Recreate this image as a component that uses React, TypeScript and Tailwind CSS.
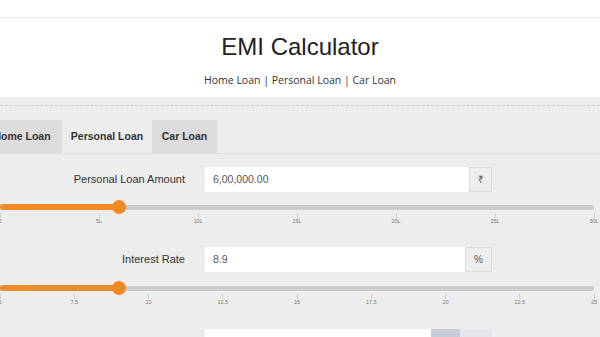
import React from 'react';

const amountTicks = ['0', '5L', '10L', '15L', '20L', '25L', '30L'];
const rateTicks = ['5', '7.5', '10', '12.5', '15', '17.5', '20', '22.5', '25'];

function Slider({ percent, ticks }: { percent: number; ticks: string[] }) {
  return (
    <div className="w-[594px]">
      <div className="relative h-[14px]">
        <div className="absolute left-0 right-0 top-[5px] h-[5px] rounded-full bg-[#cccccc]" />
        <div className="absolute left-0 top-[4px] h-[6px] rounded-full bg-[#f28a26]" style={{ width: `${percent}%` }} />
        <div
          className="absolute top-0 h-[14px] w-[14px] -ml-[7px] rounded-full bg-[#f28a26]"
          style={{ left: `${percent}%` }}
        />
      </div>
      <div className="flex justify-between -mt-[1px]">
        {ticks.map((t) => (
          <div key={t} className="relative w-0 flex flex-col items-center">
            <div className="w-px h-[5px] bg-[#d0d0d0]" />
            <span className="text-[5.5px] leading-[7px] text-[#777] whitespace-nowrap">{t}</span>
          </div>
        ))}
      </div>
    </div>
  );
}

function Field({ label, value, inputWidth, addon, addonWidth }: { label: string; value: string; inputWidth: string; addon: string; addonWidth: string }) {
  return (
    <div className="flex items-center h-[25px]">
      <div className="w-[185px] text-right text-[11px] text-[#333]">{label}</div>
      <div className="ml-[20px] flex h-[25px]">
        <div className={`${inputWidth} bg-white flex items-center pl-[8px] text-[10.5px] text-[#555]`}>{value}</div>
        <div className={`${addonWidth} bg-[#eeeeee] border border-[#dcdcdc] flex items-center justify-center text-[10px] text-[#555]`}>{addon}</div>
      </div>
    </div>
  );
}

export default function App() {
  return (
    <div className="w-[600px] h-[337px] overflow-hidden bg-white font-['Liberation_Sans',Arial,sans-serif]">
      <div className="h-[18px] border-b border-[#e9e9e9]" />
      <header className="h-[79px] flex flex-col items-center">
        <h1 className="mt-[14px] text-[24px] leading-[30px] text-[#222]">EMI Calculator</h1>
        <p className="mt-[11px] text-[10.5px] leading-[14px] text-[#333] font-['Open_Sans',sans-serif]">
          Home Loan | Personal Loan | Car Loan
        </p>
      </header>
      <section className="bg-[#ededed] h-[240px] pt-[8px]">
        <div className="border-t border-dashed border-[#cfcfcf]" />
        <div className="mt-[14px] flex border-b border-[#dedede] h-[34px]">
          <div className="-ml-[18px] w-[80px] bg-[#dcdcdc] flex items-center justify-center text-[10.5px] font-bold text-[#333]">Home Loan</div>
          <div className="w-[90px] bg-[#ededed] flex items-center justify-center text-[10.5px] font-bold text-[#333]">Personal Loan</div>
          <div className="w-[65px] bg-[#dcdcdc] flex items-center justify-center text-[10.5px] font-bold text-[#333]">Car Loan</div>
        </div>
        <div className="mt-[13px]">
          <Field label="Personal Loan Amount" value="6,00,000.00" inputWidth="w-[264px]" addon="₹" addonWidth="w-[23px]" />
        </div>
        <div className="mt-[8px]">
          <Slider percent={20} ticks={amountTicks} />
        </div>
        <div className="mt-[22px]">
          <Field label="Interest Rate" value="8.9" inputWidth="w-[260px]" addon="%" addonWidth="w-[27px]" />
        </div>
        <div className="mt-[9px]">
          <Slider percent={20} ticks={rateTicks} />
        </div>
        <div className="mt-[23px] flex h-[25px]">
          <div className="w-[205px]" />
          <div className="w-[226px] bg-white" />
          <div className="w-[29px] bg-[#c7cdd4]" />
          <div className="w-[32px] bg-[#e5e7ec]" />
        </div>
      </section>
    </div>
  );
}
